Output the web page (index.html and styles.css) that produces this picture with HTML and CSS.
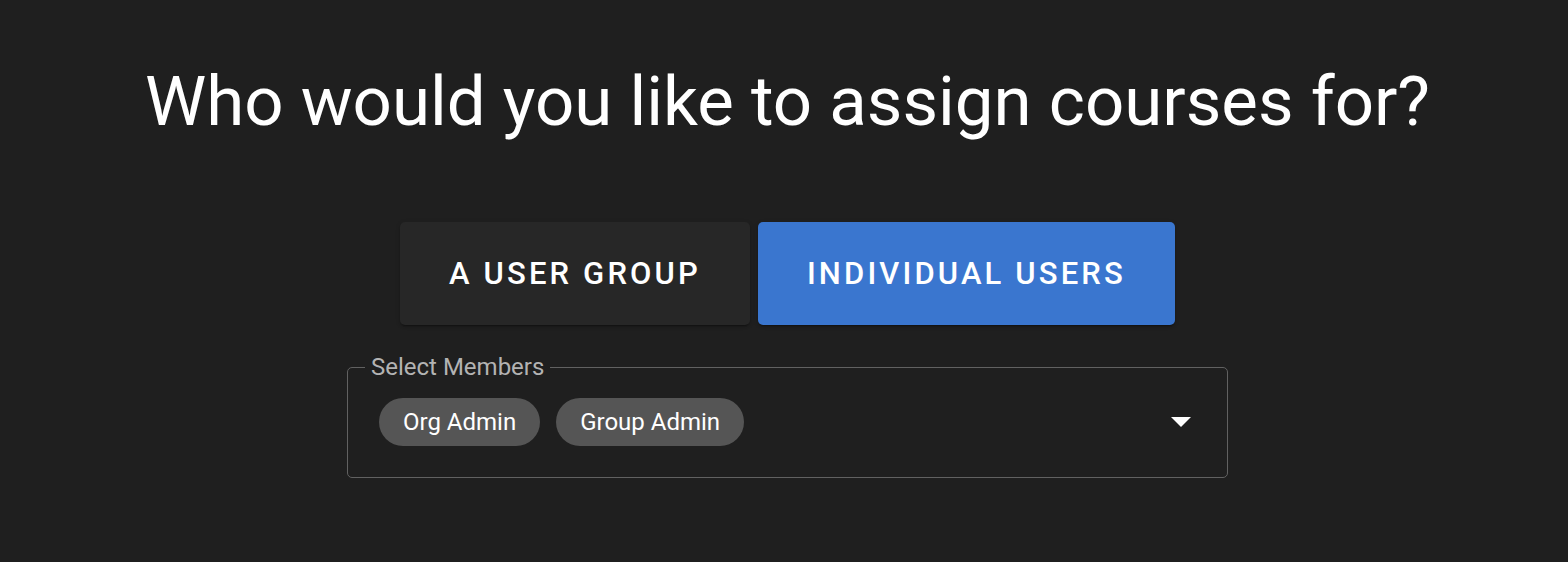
FILE: index.html
```html
<!DOCTYPE html>
<html lang="en">

<head>
    <meta charset="UTF-8">
    <meta name="viewport" content="width=device-width, initial-scale=1.0">
    <title>Assign Courses</title>
    <link rel="stylesheet" href="styles.css">
</head>

<body>
    <div class="container">
        <h1 class="title">Who would you like to assign courses for?</h1>

        <div class="toggle-group">
            <button type="button" class="toggle-btn">A User Group</button>
            <button type="button" class="toggle-btn active">Individual Users</button>
        </div>

        <fieldset class="select-box">
            <legend>Select Members</legend>
            <div class="select-row">
                <div class="chips">
                    <span class="chip">Org Admin</span>
                    <span class="chip">Group Admin</span>
                </div>
                <!-- dropdown arrow -->
                <svg class="arrow" width="20" height="10" viewBox="0 0 20 10">
                    <path d="M0 0 L20 0 L10 10 Z" fill="#fff"/>
                </svg>
            </div>
        </fieldset>
    </div>
</body>

</html>
```

FILE: styles.css
```css
/* General Reset */
* {
    margin: 0;
    padding: 0;
    box-sizing: border-box;
    font-family: 'Roboto', 'Liberation Sans', sans-serif;
}

body {
    background: #1f1f1f;
    color: #fff;
    min-height: 100vh;
}

.container {
    display: flex;
    flex-direction: column;
    align-items: center;
    padding-top: 61px;
    padding-left: 7px;
}

.title {
    font-size: 69px;
    font-weight: 400;
    line-height: normal;
    text-align: center;
}

/* Toggle buttons */
.toggle-group {
    display: flex;
    gap: 8px;
    margin-top: 80px;
}

.toggle-btn {
    height: 103px;
    padding: 0 49px;
    border: none;
    border-radius: 5px;
    background: #272727;
    color: #fff;
    font-size: 31px;
    font-weight: 500;
    letter-spacing: 3.15px;
    text-transform: uppercase;
    box-shadow: 0 3px 1px -2px rgba(0, 0, 0, 0.2), 0 2px 2px 0 rgba(0, 0, 0, 0.14), 0 1px 5px 0 rgba(0, 0, 0, 0.12);
    cursor: pointer;
}

.toggle-btn.active {
    background: #3a76cf;
}

/* Select field */
.select-box {
    width: 881px;
    margin-top: 30px;
    border: 1px solid #616161;
    border-radius: 5px;
    padding: 19px 36px 31px 31px;
}

.select-box legend {
    margin-left: -14px;
    padding: 0 6px;
    font-size: 24px;
    line-height: 24px;
    color: #b3b3b3;
}

.select-row {
    display: flex;
    align-items: center;
}

.chips {
    display: flex;
    gap: 16px;
}

.chip {
    display: inline-flex;
    align-items: center;
    height: 48px;
    padding: 0 24px;
    border-radius: 24px;
    background: #555;
    font-size: 24px;
    color: #fff;
}

.arrow {
    margin-left: auto;
}
```
